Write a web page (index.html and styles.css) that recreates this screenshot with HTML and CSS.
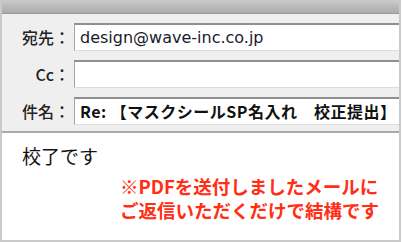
FILE: index.html
```html
<!DOCTYPE html>
<html lang="ja">
  <head>
    <meta charset="UTF-8" />
    <meta name="viewport" content="width=device-width, initial-scale=1.0" />
    <title>校正提出</title>
    <link rel="stylesheet" href="styles.css">
  </head>

  <body>
    <div class="mail-window">
      <div class="title-bar"></div>
      <div class="mail-header">
        <div class="header-row">
          <span class="header-label">宛先：</span>
          <div class="header-field address">design@wave-inc.co.jp</div>
        </div>
        <div class="header-row">
          <span class="header-label">Cc：</span>
          <div class="header-field"></div>
        </div>
        <div class="header-row">
          <span class="header-label">件名：</span>
          <div class="header-field subject">Re: 【マスクシールSP名入れ　校正提出】</div>
        </div>
      </div>
      <div class="mail-body">
        <p class="body-text">校了です</p>
        <p class="note">※PDFを送付しましたメールに<br />ご返信いただくだけで結構です</p>
      </div>
    </div>
  </body>
</html>
```

FILE: styles.css
```css
body {
  margin: 0;
  padding: 0;
  background-color: #ffffff;
  font-family: "Noto Sans CJK JP", sans-serif;
}

.mail-window {
  box-sizing: border-box;
  width: 401px;
  height: 242px;
  border: 2px solid #c9c9c9;
  display: flex;
  flex-direction: column;
}

.title-bar {
  height: 11px;
  background: linear-gradient(#c4c4c4, #acacac);
  border-bottom: 1px solid #9a9a9a;
}

.mail-header {
  display: flex;
  flex-direction: column;
  gap: 9px;
  padding: 9px 0 6px;
  background-color: #efefef;
  border-bottom: 2px solid #aaaaaa;
}

.header-row {
  display: flex;
  align-items: center;
  height: 28px;
}

.header-label {
  width: 68px;
  padding-right: 4px;
  text-align: right;
  font-size: 16px;
  font-weight: 500;
  color: #222;
  white-space: nowrap;
}

.header-field {
  flex: 1;
  box-sizing: border-box;
  height: 28px;
  padding-left: 5px;
  background-color: #ffffff;
  border-top: 2px solid #8f8f8f;
  border-left: 1px solid #a5a5a5;
  border-bottom: 1px solid #dcdcdc;
  line-height: 25px;
  color: #111;
  white-space: nowrap;
}

.address {
  font-family: "DejaVu Sans", sans-serif;
  font-size: 16px;
  color: #1a1a2e;
}

.subject {
  font-size: 16px;
  font-weight: bold;
  letter-spacing: 0.5px;
}

.mail-body {
  flex: 1;
  padding: 10px 20px 0;
}

.body-text {
  margin: 0;
  font-size: 19px;
  line-height: 26px;
  color: #111;
}

.note {
  margin: 5px 0 0 98px;
  font-size: 18.5px;
  font-weight: bold;
  line-height: 24px;
  color: #ff2e14;
  white-space: nowrap;
}
```
